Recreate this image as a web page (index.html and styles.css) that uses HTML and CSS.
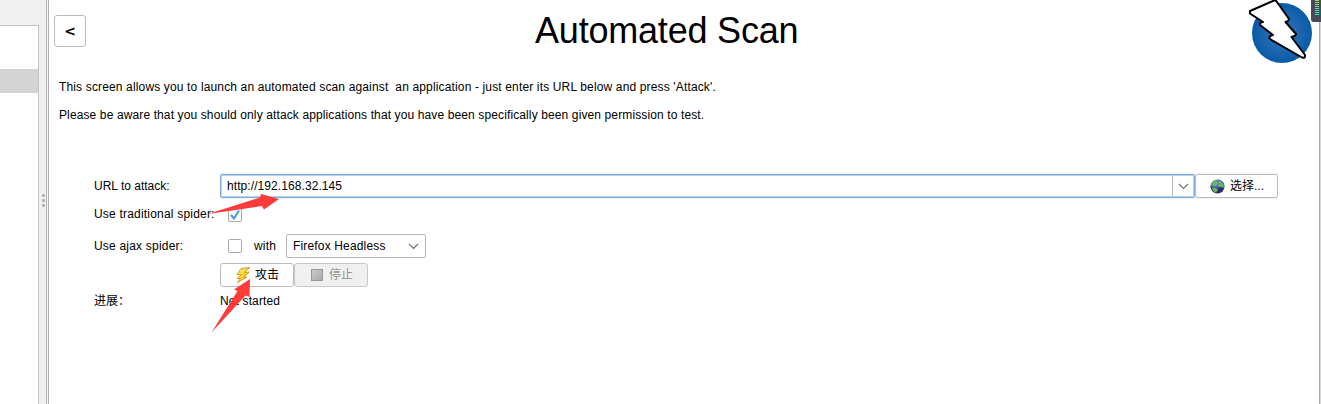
FILE: index.html
```html
<!DOCTYPE html>
<html lang="zh">
<head>
<meta charset="utf-8">
<title>Automated Scan</title>
<link rel="stylesheet" href="styles.css">
</head>
<body>
<div class="app">
  <aside class="sidebar"><div class="tree"><div class="selected"></div></div></aside>
  <div class="splitter"><i></i><i></i><i></i></div>
  <main class="panel">
    <header class="header">
      <button class="back">&lt;</button>
      <h1>Automated Scan</h1>
      <svg class="logo" width="66" height="66" viewBox="0 0 66 66">
        <defs><radialGradient id="disc"><stop offset="0" stop-color="#3873b9"/><stop offset=".6" stop-color="#1d66b1"/><stop offset="1" stop-color="#085ba7"/></radialGradient></defs>
        <circle cx="35" cy="33" r="30" fill="url(#disc)"/>
        <path d="M3 11 L27 .5 Q29 0 30 2 L42 19 Q42 21 38.500 22 L49 34 Q49 36 44.500 37 L58 55 Q58.500 58.500 55 57.500 L23 39 Q21 36 26 35 L13 25 Q12 22.500 16 22 L3 13.500 Z" fill="#fff" stroke="#000" stroke-width="2" stroke-linejoin="round"/>
      </svg>
    </header>
    <section class="intro">
      <p class="first">This screen allows you to launch an automated scan against&nbsp; an application - just enter its URL below and press 'Attack'.</p>
      <p class="second">Please be aware that you should only attack applications that you have been specifically been given permission to test.</p>
    </section>
    <section class="form">
      <label>URL to attack:</label>
      <div class="url-row">
        <div class="url"><span>http://192.168.32.145</span><div class="drop"><svg width="11" height="7" viewBox="0 0 11 7"><path d="M1 1 5.500 5.500 10 1"/></svg></div></div>
        <button class="button select">
          <svg width="15" height="15" viewBox="0 0 15 15"><defs><radialGradient id="globe" cx=".35" cy=".25"><stop offset="0" stop-color="#a4b0f0"/><stop offset=".6" stop-color="#5660c0"/><stop offset="1" stop-color="#2e2b72"/></radialGradient></defs><circle cx="7.500" cy="7.500" r="7" fill="url(#globe)"/><path d="M1 6Q2 2 6 1L7.500 3 5 5 6 6.500 3 7ZM8 2 11 1.800 14 6 13.500 9 11 8 9 8 8 6 9 4.500ZM2 9 6 9 8 11 6 13.500Q3 13 2 9Z" fill="#59bf55"/></svg>
          <span>选择...</span>
        </button>
      </div>
      <label class="spider traditional">Use traditional spider:</label>
      <div class="check-row"><i class="check"><svg width="12" height="12" viewBox="0 0 12 12"><path d="M2 6 5 9.500 10 1.500" fill="none" stroke="#4799df" stroke-width="2"/></svg></i></div>
      <label class="spider">Use ajax spider:</label>
      <div class="check-row"><i class="check"></i><span class="with">with</span><div class="browser"><span>Firefox Headless</span><svg width="11" height="7" viewBox="0 0 11 7"><path d="M1 1 5.500 5.500 10 1"/></svg></div></div>
      <span></span>
      <div class="actions">
        <button class="button attack"><svg width="17" height="17" viewBox="0 0 17 17"><defs><linearGradient id="bolt" x2="1" y2="1"><stop stop-color="#fff280"/><stop offset=".55" stop-color="#ffd21f"/><stop offset="1" stop-color="#d89408"/></linearGradient></defs><path d="M6 1.500 14.500 .5 9.500 5.500 14.500 5 8.500 10 12 10 2.500 15.500 5.500 11.500 2 11.500 6 7.500 2 7.500Z" fill="url(#bolt)" stroke="#c08c18" stroke-width=".8"/></svg><span>攻击</span></button>
        <button class="button stop"><i></i><span>停止</span></button>
      </div>
      <label class="progress">进展：</label>
      <span class="status">Not started</span>
    </section>
  </main>
  <div class="edge"></div>
</div>
<div class="meter"><svg width="5" height="18" viewBox="0 0 5 18" shape-rendering="crispEdges"><path d="M0 .5H4M0 2.500H4M0 4.500H4" stroke="#a6d56b"/><path d="M0 6.500H4M0 8.500H4" stroke="#68dda0"/><path d="M0 10.500H4M0 12.500H4M0 14.500H4" stroke="#36e0c1"/></svg></div>
<svg class="arrows" width="75" height="145" viewBox="0 0 75 145">
  <path d="M1 21 53 4.500 54 1 72 6 57 16.500 55 13Z"/>
  <path d="M4.500 139.500 30.500 98 27 96.500 43 86 42.500 104 38.500 102.500Z"/>
</svg>
</body>
</html>
```
FILE: styles.css
```css
* { box-sizing: border-box; }
body { margin: 0; font: 12px/16px "Liberation Sans", "Noto Sans CJK SC", sans-serif; color: #000; background: #fff; overflow: hidden; }
button { margin: 0; padding: 0; font: inherit; color: inherit; }
.app { display: flex; width: 1321px; height: 404px; }
.sidebar { width: 39px; padding-top: 25px; background: #f0f0f0; }
.tree { height: 379px; padding-top: 43px; background: #fff; border-top: 1px solid #c3c3c3; border-right: 1px solid #c3c3c3; }
.selected { height: 24px; background: #d4d4d4; }
.splitter { width: 10px; background: linear-gradient(90deg, #f0f0f0 7px, #b4b4b4 7px 8px, #f5f5f5 8px 9px, #b0b0b0 9px); padding: 194px 0 0 3px; }
.splitter i { display: block; width: 3px; height: 3px; margin-bottom: 2px; border-radius: 1px; background: #b1b1b1; }
.panel { width: 1270px; }
.edge { width: 2px; border-left: 1px solid #aaa; background: #d8d8d8; }
.header { display: flex; height: 79px; padding: 0 5px; }
.back { width: 32px; height: 32px; margin-top: 15px; border: 1px solid #bbb; border-radius: 3px; background: #fff; font: bold 14px/28px "DejaVu Sans", sans-serif; }
.header h1 { width: 263px; margin: 11px 0 0 449px; font-weight: 400; font-size: 36px; line-height: 40px; letter-spacing: -.2px; white-space: nowrap; }
.logo { margin-left: 449px; }
.intro { height: 94px; padding-left: 10px; }
.intro p { margin: 0 0 12px; white-space: nowrap; }
.first { letter-spacing: .147px; }
.second { letter-spacing: .119px; }
.form { display: grid; grid-template-columns: 126px 1058px; grid-template-rows: 26px 32px 30px 28px 24px; padding-left: 45px; align-items: center; }
.form label, .status { white-space: nowrap; }
.spider { letter-spacing: .2px; }
.status { letter-spacing: .13px; }
.url-row { display: flex; height: 26px; padding-bottom: 1px; border-top: 1px solid #f1f1f1; background: #f1f1f1; }
.url { display: flex; width: 975px; height: 24px; padding-left: 6px; border: 1px solid #7dabdd; box-shadow: inset 0 0 0 1px #b6d3f1; border-radius: 2px; background: #fff; line-height: 22px; letter-spacing: .08px; }
.drop { display: grid; place-items: center; width: 22px; margin-left: auto; border-left: 1px solid #bbb; }
.drop path, .browser path { fill: none; stroke: #727272; stroke-width: 1.2; }
.button { display: flex; align-items: center; height: 24px; border: 1px solid #bbb; border-radius: 3px; background: #fff; }
.select { width: 83px; padding-left: 14px; gap: 5px; }
.check-row { display: flex; align-items: center; padding-left: 8px; }
.check { display: grid; place-items: center; width: 14px; height: 14px; border: 1px solid #aaa; border-radius: 2px; background: #fff; }
.with { width: 32px; margin-left: 12px; letter-spacing: .2px; }
.browser { display: flex; align-items: center; justify-content: space-between; width: 140px; height: 24px; padding: 0 6px; border: 1px solid #b6b6b6; border-radius: 2px; letter-spacing: .16px; }
.traditional { margin-top: -2px; }
.actions { display: flex; }
.attack { width: 74px; padding-left: 14px; gap: 3px; }
.stop { width: 74px; padding-left: 16px; gap: 6px; background: #f0f0f0; color: #929292; border-color: #c8c8c8; }
.stop i { width: 12px; height: 12px; border: 1px solid #999; background: linear-gradient(135deg, #ccc, #aaa); }
.meter { position: absolute; left: 1311px; top: 0; width: 10px; height: 22px; padding-left: 4px; border-radius: 0 0 0 3px; background: #474b57; }
.meter svg { display: block; }
.arrows { position: absolute; left: 207px; top: 193px; fill: #fd3b38; }
```
